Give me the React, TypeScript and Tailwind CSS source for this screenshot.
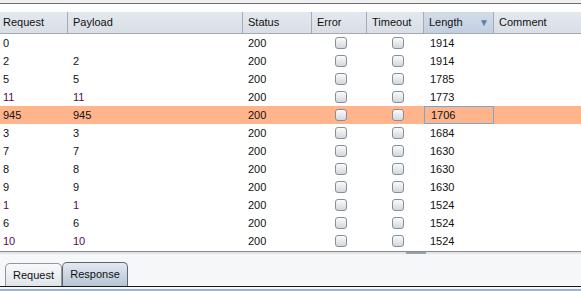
import React from 'react';

type Row = { req: string; payload: string; length: string; purple?: boolean; hl?: boolean };

const rows: Row[] = [
  { req: '0', payload: '', length: '1914' },
  { req: '2', payload: '2', length: '1914' },
  { req: '5', payload: '5', length: '1785' },
  { req: '11', payload: '11', length: '1773', purple: true },
  { req: '945', payload: '945', length: '1706', hl: true },
  { req: '3', payload: '3', length: '1684' },
  { req: '7', payload: '7', length: '1630' },
  { req: '8', payload: '8', length: '1630' },
  { req: '9', payload: '9', length: '1630' },
  { req: '1', payload: '1', length: '1524', purple: true },
  { req: '6', payload: '6', length: '1524' },
  { req: '10', payload: '10', length: '1524', purple: true },
];

const Checkbox: React.FC = () => (
  <div className="w-[12px] h-[12px] rounded-[3px] border border-[#858f9a] bg-gradient-to-b from-[#fbfbfb] to-[#d3d7dc]" />
);

const HeaderCell: React.FC<{ w: string; label: string; sorted?: boolean; last?: boolean }> = ({ w, label, sorted, last }) => (
  <div
    className={`${w} h-full flex items-center pl-[5px] ${last ? '' : 'border-r border-[#a3abb6]'} ${
      sorted ? 'bg-gradient-to-b from-[#d3ddea] to-[#c2cfe0]' : ''
    }`}
  >
    <span className="flex-1">{label}</span>
    {sorted && <span className="text-[10px] text-[#5a80ad] pr-[4px]">▼</span>}
  </div>
);

const App: React.FC = () => {
  return (
    <div
      className="w-[581px] h-[291px] bg-white flex flex-col overflow-hidden text-[11px] text-[#111]"
      style={{ fontFamily: '"Liberation Sans", Arial, sans-serif' }}
    >
      <div className="h-[3px] bg-[#eef1ec]" />
      <div className="h-[1px] bg-[#6f6a76]" />
      <div className="h-[8px] bg-white" />

      {/* header */}
      <div className="h-[22px] flex bg-gradient-to-b from-[#e4e8ee] to-[#d9dee6] border-b border-[#a3abb6]">
        <div className="w-[68px] h-full flex items-center pl-[3px] border-r border-[#a3abb6]">Request</div>
        <HeaderCell w="w-[175px]" label="Payload" />
        <HeaderCell w="w-[69px]" label="Status" />
        <HeaderCell w="w-[55px]" label="Error" />
        <HeaderCell w="w-[57px]" label="Timeout" />
        <HeaderCell w="w-[70px]" label="Length" sorted />
        <HeaderCell w="w-[87px]" label="Comment" last />
      </div>

      {/* rows */}
      <div className="flex flex-col">
        {rows.map((r) => (
          <div key={r.req} className={`h-[18px] flex items-center ${r.hl ? 'bg-[#ffb48c]' : ''}`}>
            <div className={`w-[68px] pl-[3px] ${r.purple ? 'text-[#560a50]' : ''}`}>{r.req}</div>
            <div className={`w-[175px] pl-[5px] ${r.purple ? 'text-[#560a50]' : ''}`}>{r.payload}</div>
            <div className="w-[69px] pl-[5px]">200</div>
            <div className="w-[55px] flex justify-center pl-[3px]">
              <Checkbox />
            </div>
            <div className="w-[57px] flex justify-center pl-[4px]">
              <Checkbox />
            </div>
            <div
              className={`w-[70px] h-full flex items-center pl-[6px] ${
                r.hl ? 'border border-[#7aa6cf] pl-[5px]' : ''
              }`}
            >
              {r.length}
            </div>
            <div className="w-[87px]" />
          </div>
        ))}
      </div>

      {/* splitter */}
      <div className="h-[1px] mt-[1px] bg-[#8a8a8e]" />
      <div className="h-[2px] bg-[#e4e4e8] flex justify-center">
        <div className="w-[20px] h-[2px] ml-[250px] bg-[#9ba2aa]" />
      </div>

      {/* tabs */}
      <div className="flex-1 bg-[#f6f7f9] flex flex-col">
        <div className="flex-1 flex items-end pl-[5px]">
          <div className="h-[23px] w-[57px] flex items-center justify-center rounded-t-[5px] border border-b-0 border-[#8e969f] bg-gradient-to-b from-[#f8f9fb] to-[#dfe4ea]">
            Request
          </div>
          <div className="h-[24px] w-[66px] flex items-center justify-center rounded-t-[5px] border border-b-0 border-[#5d6670] bg-gradient-to-b from-[#e3e9f0] to-[#b5c4d4]">
            Response
          </div>
        </div>
        <div className="h-[1px] bg-[#1a1a1a]" />
        <div className="h-[2px] bg-[#f6f7f9]" />
        <div className="h-[2px] bg-[#9fb4cc]" />
      </div>
    </div>
  );
};

export default App;
